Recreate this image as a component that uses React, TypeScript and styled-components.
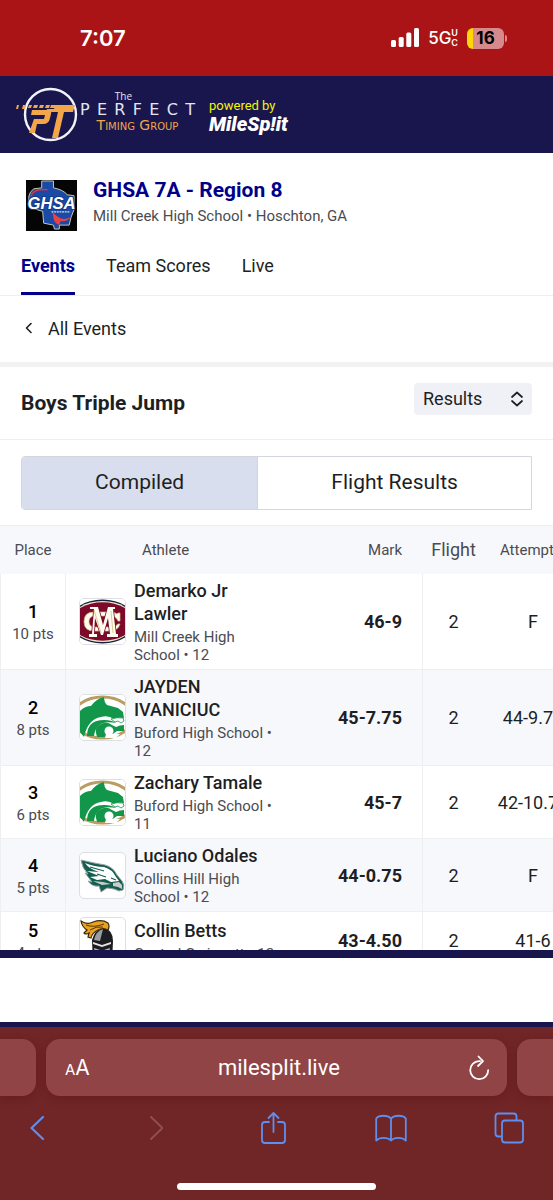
import React from "react";
import styled, { createGlobalStyle } from "styled-components";

const color = {
  statusRed: "#ab1416",
  navy: "#18164d",
  link: "#00008b",
  ink: "#1d1f24",
  muted: "#4a4c52",
  line: "#efeff1",
  stripe: "#f7f8fc",
  chrome: "#702526",
  pill: "#904445",
  chromeBlue: "#5e8ff0",
};

const GlobalStyle = createGlobalStyle`
  *, *::before, *::after { box-sizing: border-box; }
  body {
    margin: 0;
    background: #fff;
    color: ${color.ink};
    font-family: Roboto, "Liberation Sans", sans-serif;
  }
  button, select { font: inherit; color: inherit; }
`;

const Screen = styled.div`
  display: flex;
  flex-direction: column;
  height: 100vh;
  overflow: hidden;
`;

const StatusBar = styled.div`
  flex: none;
  display: flex;
  align-items: center;
  justify-content: space-between;
  height: 76px;
  padding: 0 46px 0 80px;
  background: ${color.statusRed};
  color: #fff;
  font-family: Inter, sans-serif;
`;

const Clock = styled.time`
  font-size: 22px;
  font-weight: 600;
  line-height: 28px;
`;

const StatusIcons = styled.div`
  display: flex;
  align-items: center;
  gap: 9px;
`;

const Network = styled.span`
  display: flex;
  align-items: center;
  font-size: 17px;
  font-weight: 500;
  line-height: 24px;
`;

const NetworkBand = styled.span`
  display: flex;
  flex-direction: column;
  font-size: 9px;
  font-weight: 600;
  line-height: 10px;
`;

const Battery = styled.span`
  display: flex;
  align-items: center;
  gap: 1px;
  &::after {
    content: "";
    width: 2px;
    height: 7px;
    border-radius: 0 3px 3px 0;
    background: #d68a8b;
  }
`;

const BatteryCell = styled.span`
  width: 37px;
  height: 21px;
  border-radius: 6px;
  background: linear-gradient(90deg, #ffd60a 6px, #d68a8b 6px);
  color: #000;
  font-size: 17px;
  font-weight: 700;
  line-height: 21px;
  text-align: center;
`;

const SponsorBar = styled.header`
  flex: none;
  display: flex;
  align-items: center;
  gap: 14px;
  height: 77px;
  padding: 0 16px;
  background: ${color.navy};
`;

const Sponsor = styled.div`
  display: flex;
  align-items: center;
  gap: 2px;
`;

const Wordmark = styled.div`
  display: flex;
  flex-direction: column;
  align-items: center;
  width: 115px;
  padding-bottom: 8px;
  color: #e4e4f2;
`;

const WordThe = styled.span`
  font-family: "Open Sans", sans-serif;
  font-size: 10px;
  line-height: 12px;
  padding-right: 28px;
`;

const WordPerfect = styled.span`
  display: flex;
  justify-content: space-between;
  width: 100%;
  font-family: "DejaVu Sans", sans-serif;
  font-size: 16px;
  line-height: 16px;
`;

const WordTiming = styled.span`
  font-family: "DejaVu Sans", sans-serif;
  font-variant: small-caps;
  font-size: 14px;
  line-height: 14px;
  white-space: nowrap;
  color: #f0a64c;
`;

const Powered = styled.div`
  display: flex;
  flex-direction: column;
  padding-top: 3px;
  color: #f2f500;
  font-size: 13px;
  line-height: 16px;
`;

const MileSplit = styled.a`
  color: #fff;
  font-size: 20px;
  font-style: italic;
  font-weight: 900;
  line-height: 21px;
  text-decoration: none;
`;

const Content = styled.main`
  flex: 1;
  min-height: 0;
  overflow: hidden;
`;

const MeetHeader = styled.section`
  height: 143px;
  padding: 25px 21px 0;
  border-bottom: 1px solid ${color.line};
  display: flex;
  flex-direction: column;
  justify-content: space-between;
`;

const Meet = styled.div`
  display: flex;
  align-items: center;
  gap: 16px;
  padding-left: 5px;
`;

const MeetText = styled.div`
  min-width: 0;
  padding-bottom: 2px;
`;

const MeetTitle = styled.h1`
  margin: 0;
  color: ${color.link};
  font-size: 21px;
  font-weight: 700;
  line-height: 24px;
`;

const MeetVenue = styled.p`
  margin: 0;
  color: ${color.muted};
  font-size: 15px;
  line-height: 28px;
`;

const Tabs = styled.nav`
  display: flex;
  gap: 31px;
`;

const Tab = styled.a<{ $active?: boolean }>`
  height: 42px;
  border-bottom: 3px solid ${(p) => (p.$active ? color.link : "transparent")};
  color: ${(p) => (p.$active ? color.link : color.ink)};
  font-size: 18px;
  font-weight: ${(p) => (p.$active ? 700 : 400)};
  line-height: 26px;
  text-decoration: none;
`;

const BackLink = styled.a`
  display: flex;
  align-items: center;
  gap: 15px;
  height: 66px;
  padding: 0 24px 2px;
  color: ${color.ink};
  font-size: 18px;
  text-decoration: none;
`;

const EventHeader = styled.section`
  display: flex;
  align-items: center;
  justify-content: space-between;
  height: 78px;
  padding: 0 21px;
  border-top: 5px solid #f2f2f3;
  border-bottom: 1px solid ${color.line};
`;

const EventTitle = styled.h2`
  margin: 0;
  font-size: 21px;
  font-weight: 700;
  line-height: 28px;
`;

const SelectBox = styled.label`
  position: relative;
  display: block;
  width: 118px;
  height: 40px;
  svg {
    position: absolute;
    right: 8px;
    top: 8px;
    pointer-events: none;
  }
`;

const Select = styled.select`
  appearance: none;
  display: block;
  width: 100%;
  height: 32px;
  padding: 0 9px 2px;
  border: 0;
  border-radius: 4px;
  background: #f0f0f7;
  color: ${color.ink};
  font-size: 18px;
`;

const Segments = styled.div`
  display: flex;
  height: 54px;
  margin: 16px 21px 15px;
  border: 1px solid #d3d6de;
  border-radius: 4px 0 0 4px;
  overflow: hidden;
`;

const Segment = styled.button<{ $active?: boolean }>`
  flex: 1 1 auto;
  padding: 0 0 2px;
  border: 0;
  border-left: ${(p) => (p.$active ? "0" : "1px solid #d3d6de")};
  background: ${(p) => (p.$active ? "#d8deed" : "#fff")};
  color: ${color.ink};
  font-size: 21px;
`;

const Results = styled.table`
  width: 100%;
  min-width: 582px;
  border-collapse: separate;
  border-spacing: 0;
  table-layout: fixed;
`;

const Column = styled.col<{ $width?: number }>`
  width: ${(p) => (p.$width ? `${p.$width}px` : "auto")};
`;

const HeadCell = styled.th<{ $align?: string; $large?: boolean }>`
  height: 49px;
  padding: ${(p) => (p.$align === "left" ? "0 0 0 76px" : p.$align === "right" ? "0 21px 0 0" : "0")};
  border-top: 1px solid ${color.line};
  background: ${color.stripe};
  color: ${color.muted};
  font-size: ${(p) => (p.$large ? 18 : 15)}px;
  font-weight: 400;
  line-height: 24px;
  text-align: ${(p) => p.$align ?? "center"};
  white-space: nowrap;
`;

const Row = styled.tr`
  &:nth-child(even) { background: ${color.stripe}; }
`;

const Cell = styled.td`
  padding: 0;
  border-bottom: 1px solid ${color.line};
  font-size: 18px;
  text-align: center;
  vertical-align: middle;
`;

const PlaceCell = styled(Cell)`
  padding-top: 3px;
  border-left: 1px solid ${color.line};
  border-right: 1px solid ${color.line};
`;

const MarkCell = styled(Cell)`
  padding-right: 20px;
  border-right: 1px solid ${color.line};
  font-weight: 700;
  text-align: right;
`;

const AthleteCell = styled(Cell)`
  padding: 5px 8px 5px 13px;
  text-align: left;
`;

const PlaceNumber = styled.div`
  font-weight: 500;
  line-height: 22px;
  color: #000;
`;

const Points = styled.div`
  color: ${color.muted};
  font-size: 15px;
  line-height: 22px;
`;

const Athlete = styled.div`
  display: flex;
  align-items: center;
  gap: 8px;
`;

const Badge = styled.span`
  flex: none;
  width: 47px;
  height: 47px;
  border: 1px solid #dedfe3;
  border-radius: 5px;
  background: #fff;
  overflow: hidden;
  svg { display: block; width: 100%; height: 100%; }
`;

const AthleteText = styled.div`
  width: 148px;
`;

const AthleteName = styled.div`
  margin-bottom: 3px;
  font-weight: 500;
  line-height: 23px;
`;

const School = styled.div`
  color: ${color.muted};
  font-size: 15px;
  line-height: 18px;
`;

const AdSlot = styled.aside`
  flex: none;
  height: 77px;
  border-top: 8px solid ${color.navy};
  border-bottom: 5px solid ${color.navy};
  background: #fff;
`;

const BrowserBar = styled.footer`
  flex: none;
  display: flex;
  flex-direction: column;
  align-items: center;
  height: 173px;
  padding: 12px 0 10px;
  background: ${color.chrome};
`;

const TabStrip = styled.div`
  display: flex;
  gap: 10px;
  width: 100%;
  height: 57px;
`;

const NeighborTab = styled.div<{ $side: "left" | "right" }>`
  flex: none;
  width: 36px;
  border-radius: ${(p) => (p.$side === "left" ? "0 14px 14px 0" : "14px 0 0 14px")};
  background: ${color.pill};
  box-shadow: 0 3px 10px rgba(70, 0, 0, 0.2);
`;

const AddressBar = styled.div`
  flex: 1;
  display: flex;
  align-items: center;
  justify-content: space-between;
  padding: 0 17px 0 19px;
  border-radius: 14px;
  background: ${color.pill};
  box-shadow: 0 3px 10px rgba(70, 0, 0, 0.2);
  color: #fff;
`;

const BarButton = styled.button`
  display: flex;
  align-items: center;
  justify-content: center;
  padding: 0;
  border: 0;
  background: none;
`;

const TextSizeButton = styled(BarButton)`
  align-items: baseline;
  font-family: Inter, sans-serif;
  font-size: 21px;
  small { font-size: 15px; }
`;

const Address = styled.span`
  font-size: 22px;
  line-height: 28px;
`;

const Toolbar = styled.nav`
  display: flex;
  justify-content: space-between;
  align-items: center;
  width: 100%;
  height: 64px;
  padding: 0 28px 0 21px;
`;

const ToolButton = styled(BarButton)`
  width: 32px;
  height: 40px;
  color: ${color.chromeBlue};
  &:disabled { color: #8f4e50; }
`;

const HomeIndicator = styled.div`
  width: 36%;
  height: 7px;
  margin-top: auto;
  border-radius: 4px;
  background: #fff;
`;

const SignalIcon = () => (
  <svg width="28" height="20" viewBox="0 0 28 20" fill="#fff" aria-hidden="true">
    <rect x="0" y="12" width="5" height="7" rx="1.5" />
    <rect x="7.7" y="9" width="5" height="10" rx="1.5" />
    <rect x="15.3" y="4.5" width="5" height="14.5" rx="1.5" />
    <rect x="23" y="0" width="5" height="19" rx="1.5" />
  </svg>
);

const TimingLogo = () => (
  <svg width="62" height="56" viewBox="0 0 62 56" aria-hidden="true">
    <circle cx="34.500" cy="27.500" r="25.500" fill="none" stroke="#f2f2fa" strokeWidth="2.4" />
    <g fill="#f3a649">
      <path d="M16 23h17q3 0 2 4l-1 4q-1 6-7 6h-6l-2 9h-6l5-14h10l1-4H15z" />
      <path d="M31 22h7l1-4h20l-2 7h-9l-6 26h-6l6-26h-12z" />
      <path d="M1 18h2l-1 4H0zM7 18h3l-1 4H6zM13 18h3l-1 3h-3zM18 18h4l-1 3h-4zM24 18h4l-1 3h-4zM30 18h4l-1 3h-4zM35 18h4v3h-5z" />
    </g>
  </svg>
);

const GhsaLogo = () => (
  <svg width="51" height="51" viewBox="0 0 52 52" role="img" aria-label="GHSA">
    <rect width="52" height="52" fill="#050505" />
    <path
      d="M16 1h12v7q10 2 14 7l7 1v14l-3 8-2 8H34v4h-5l-1-4-10-2-1-12L4 28Q0 14 8 9l8-1z"
      fill="#1a4aa5"
      stroke="#c9c9ae"
      strokeWidth="1"
    />
    <path d="M5 17Q7 8 22 10" fill="none" stroke="#d9343c" strokeWidth="1.6" />
    <path d="M27 33q4 4 8 6 6 2 12-2-5 6-12 5l-1 4q-5-2-6-7z" fill="#ea4144" />
    <text
      x="26"
      y="30"
      textAnchor="middle"
      fontFamily="Liberation Sans, sans-serif"
      fontSize="17"
      fontWeight="700"
      fontStyle="italic"
      fill="#fff"
      stroke="#143a85"
      strokeWidth="2"
      paintOrder="stroke"
    >
      GHSA
    </text>
    <path d="M26 32.500h19" stroke="#d5dcf0" strokeWidth="1.200" strokeDasharray="2 .7" />
  </svg>
);

const MillCreekLogo = () => (
  <svg viewBox="0 0 45 45" aria-hidden="true">
    <rect width="45" height="45" fill="#fff" />
    <ellipse cx="22.500" cy="22.500" rx="33" ry="22" fill="#14223c" />
    <ellipse cx="22.500" cy="22.500" rx="32" ry="20.500" fill="#f3ead0" />
    <ellipse cx="22.500" cy="22.500" rx="31" ry="19.300" fill="#7d0a2b" />
    <path
      d="M40 14v8h-2q-2-5-8-5H15q-6 0-6 5.500T15 28h15q6 0 8-3h2q-2 7-10 7H14Q4 32 4 22.500T14 13h16q5 0 7 2l1-1z"
      fill="#fffdf0"
      stroke="#d2bd78"
      strokeWidth=".7"
    />
    <path
      d="M10 8h8l5 18 5-18h7v2h-2l3 25h2v3H27v-3h3l-2-16-5 17h-2l-6-17-1 16h3v3H9v-3h3l2-25h-4z"
      fill="#fffdf0"
      stroke="#7d0a2b"
      strokeWidth="1.600"
      paintOrder="stroke"
    />
    <path d="M14 11l7 23M31 12l2 22" fill="none" stroke="#d2bd78" strokeWidth=".8" />
  </svg>
);

const BufordLogo = () => (
  <svg viewBox="0 0 45 45" aria-hidden="true">
    <rect width="45" height="45" fill="#fff" />
    <ellipse cx="22.500" cy="22.500" rx="30" ry="20.500" fill="none" stroke="#b99d63" strokeWidth="3" />
    <path d="M0 16q5-5 11-5 5-7 13-9 0 5 3 8l11 3 5 4 1 6q-6-1-10 1-6-4-13-2Q8 24 4 42l-4-5z" fill="#12974a" />
    <path d="M7 41Q7 25 24 25q8 0 12 3-20-4-22 13z" fill="#12974a" />
    <path d="M17 42q-4-10 4-13 6-3 11 1l4 2q4-2 8-2v6h-7l-7 5-6 1z" fill="#12974a" />
    <circle cx="29" cy="36" r="4.500" fill="#fff" />
    <path d="M26 39h14l-4 4H25z" fill="#fff" />
    <path d="M31 24q6-2 12-1l1 3-3 2-3-2-3 1z" fill="#fff" stroke="#12974a" strokeWidth=".8" />
  </svg>
);

const CollinsHillLogo = () => (
  <svg viewBox="0 0 45 45" aria-hidden="true">
    <path
      d="M1 7q12 3 24 5 8 2 12 10l5 6q3 4 1 9l-4 1-5-2-7-1-6 4-2-6q-7 1-11-5l4 1-7-9 3 1Q2 15 1 7z"
      fill="#145f52"
      stroke="#9aa3a1"
      strokeWidth="1"
    />
    <path
      d="M5 10q10 4 19 4 8 2 12 10l3 4-8 1-6-3-8 1-7-3 9-1-12-5 12 1Q9 16 5 10z"
      fill="#fff"
    />
    <path d="M10 14l14 4M17 21l9 3M31 25l5 2" stroke="#145f52" strokeWidth="1.100" fill="none" />
    <path d="M13 28l10 1 8 2-9 1zM33 30l6-1 3 3v4l-4-2-5-1z" fill="#c6cdcb" />
  </svg>
);

const CentralLogo = () => (
  <svg viewBox="0 0 45 45" aria-hidden="true">
    <path d="M12 22q3-11 12-12 9 2 9 13l-1 22H13z" fill="#1c1d21" />
    <path d="M14 22q2-9 9-11l-3 12z" fill="#9b9da2" />
    <path d="M13 24l9 3 9-3v2l-9 3-9-3z" fill="#e3e3e3" />
    <path d="M14 30l6 2v4l-5-2zM30 30l-6 2v4l5-2z" fill="#b8b9bd" />
    <path d="M15 38l4 1v6h-4zM29 38l-4 1v6h4z" fill="#77797e" />
    <path
      d="M1 3q6 4 12 1 9-3 15 1 2 3 0 7-5-3-10 0-6 3-7 8l-3-1 1-4q-3 2-5 0l3-3Q2 9 1 3z"
      fill="#e9a21f"
      stroke="#38270b"
      strokeWidth="1.200"
    />
    <path d="M6 7q8 3 18-1M10 12q6-4 13-3" fill="none" stroke="#54370a" strokeWidth="1" />
  </svg>
);

const results = [
  { place: 1, points: 10, name: "Demarko Jr Lawler", school: "Mill Creek High School • 12", mark: "46-9", flight: 2, attempt: "F", Logo: MillCreekLogo },
  { place: 2, points: 8, name: "JAYDEN IVANICIUC", school: "Buford High School • 12", mark: "45-7.75", flight: 2, attempt: "44-9.75", Logo: BufordLogo },
  { place: 3, points: 6, name: "Zachary Tamale", school: "Buford High School • 11", mark: "45-7", flight: 2, attempt: "42-10.75", Logo: BufordLogo },
  { place: 4, points: 5, name: "Luciano Odales", school: "Collins Hill High School • 12", mark: "44-0.75", flight: 2, attempt: "F", Logo: CollinsHillLogo },
  { place: 5, points: 4, name: "Collin Betts", school: "Central Gwinnett • 12", mark: "43-4.50", flight: 2, attempt: "41-6", Logo: CentralLogo },
];

const stroke = {
  fill: "none",
  stroke: "currentColor",
  strokeLinecap: "round" as const,
  strokeLinejoin: "round" as const,
};

export default function App() {
  return (
    <Screen>
      <GlobalStyle />
      <StatusBar>
        <Clock>7:07</Clock>
        <StatusIcons>
          <SignalIcon />
          <Network>
            5G
            <NetworkBand>
              <span>U</span>
              <span>C</span>
            </NetworkBand>
          </Network>
          <Battery>
            <BatteryCell>16</BatteryCell>
          </Battery>
        </StatusIcons>
      </StatusBar>

      <SponsorBar>
        <Sponsor>
          <TimingLogo />
          <Wordmark>
            <WordThe>The</WordThe>
            <WordPerfect aria-label="PERFECT">
              {"PERFECT".split("").map((letter, i) => (
                <span key={i}>{letter}</span>
              ))}
            </WordPerfect>
            <WordTiming>Timing Group</WordTiming>
          </Wordmark>
        </Sponsor>
        <Powered>
          powered by
          <MileSplit href="#milesplit">MileSp!it</MileSplit>
        </Powered>
      </SponsorBar>

      <Content>
        <MeetHeader>
          <Meet>
            <GhsaLogo />
            <MeetText>
              <MeetTitle>GHSA 7A - Region 8</MeetTitle>
              <MeetVenue>Mill Creek High School • Hoschton, GA</MeetVenue>
            </MeetText>
          </Meet>
          <Tabs>
            <Tab href="#events" $active>Events</Tab>
            <Tab href="#scores">Team Scores</Tab>
            <Tab href="#live">Live</Tab>
          </Tabs>
        </MeetHeader>

        <BackLink href="#all-events">
          <svg width="9" height="12" viewBox="0 0 9 12" aria-hidden="true">
            <path d="M7 1.500 2.500 6 7 10.500" {...stroke} strokeWidth="1.600" />
          </svg>
          All Events
        </BackLink>

        <EventHeader>
          <EventTitle>Boys Triple Jump</EventTitle>
          <SelectBox>
            <Select aria-label="View" defaultValue="Results">
              <option>Results</option>
            </Select>
            <svg width="14" height="16" viewBox="0 0 14 16" aria-hidden="true">
              <path d="M2 6l5-4.500L12 6M2 10l5 4.500L12 10" {...stroke} strokeWidth="1.700" />
            </svg>
          </SelectBox>
        </EventHeader>

        <Segments>
          <Segment type="button" $active aria-pressed="true">Compiled</Segment>
          <Segment type="button" aria-pressed="false">Flight Results</Segment>
        </Segments>

        <Results>
          <colgroup>
            <Column $width={66} />
            <Column />
            <Column $width={133} />
            <Column $width={61} />
            <Column $width={98} />
          </colgroup>
          <thead>
            <tr>
              <HeadCell>Place</HeadCell>
              <HeadCell $align="left">Athlete</HeadCell>
              <HeadCell $align="right">Mark</HeadCell>
              <HeadCell $large>Flight</HeadCell>
              <HeadCell>Attempt 1</HeadCell>
            </tr>
          </thead>
          <tbody>
            {results.map(({ Logo, ...r }) => (
              <Row key={r.place}>
                <PlaceCell>
                  <PlaceNumber>{r.place}</PlaceNumber>
                  <Points>{r.points} pts</Points>
                </PlaceCell>
                <AthleteCell>
                  <Athlete>
                    <Badge>
                      <Logo />
                    </Badge>
                    <AthleteText>
                      <AthleteName>{r.name}</AthleteName>
                      <School>{r.school}</School>
                    </AthleteText>
                  </Athlete>
                </AthleteCell>
                <MarkCell>{r.mark}</MarkCell>
                <Cell>{r.flight}</Cell>
                <Cell>{r.attempt}</Cell>
              </Row>
            ))}
          </tbody>
        </Results>
      </Content>

      <AdSlot />

      <BrowserBar>
        <TabStrip>
          <NeighborTab $side="left" />
          <AddressBar>
            <TextSizeButton type="button" aria-label="Text size">
              <small>A</small>A
            </TextSizeButton>
            <Address>milesplit.live</Address>
            <BarButton type="button" aria-label="Reload">
              <svg width="22" height="26" viewBox="0 0 22 26" aria-hidden="true">
                <path d="M12 6.200h-1a9 9 0 1 0 9.200 9M10.500 1.500 15 6.200l-5 4.800" {...stroke} strokeWidth="1.800" />
              </svg>
            </BarButton>
          </AddressBar>
          <NeighborTab $side="right" />
        </TabStrip>
        <Toolbar>
          <ToolButton type="button" aria-label="Back">
            <svg width="16" height="28" viewBox="0 0 16 28" aria-hidden="true">
              <path d="M14 3 2.500 14 14 25" {...stroke} strokeWidth="2.200" />
            </svg>
          </ToolButton>
          <ToolButton type="button" aria-label="Forward" disabled>
            <svg width="16" height="28" viewBox="0 0 16 28" aria-hidden="true">
              <path d="m4 3 11.500 11L4 25" {...stroke} strokeWidth="2" />
            </svg>
          </ToolButton>
          <ToolButton type="button" aria-label="Share">
            <svg width="28" height="34" viewBox="0 0 28 34" aria-hidden="true">
              <path d="M10 11H6q-3 0-3 3v15q0 3 3 3h17q3 0 3-3V14q0-3-3-3h-4M14.500 21V2M9.500 7l5-5 5 5" {...stroke} strokeWidth="1.800" />
            </svg>
          </ToolButton>
          <ToolButton type="button" aria-label="Bookmarks">
            <svg width="32" height="28" viewBox="0 0 32 28" aria-hidden="true">
              <path d="M16 4.500v22M16 4.500C12.500.8 4 .8 1.200 4.500v22c3.500-3.500 11.500-3.500 14.800 0 3.300-3.500 11.300-3.500 14.800 0v-22C28 .8 19.500.8 16 4.500z" {...stroke} strokeWidth="1.800" />
            </svg>
          </ToolButton>
          <ToolButton type="button" aria-label="Tabs">
            <svg width="32" height="32" viewBox="0 0 32 32" aria-hidden="true">
              <path d="M8 24.500H5.500q-3 0-3-3v-17q0-3 3-3h15q3 0 3 3V8" {...stroke} strokeWidth="1.800" />
              <rect x="9" y="8.500" width="21" height="22" rx="3" {...stroke} strokeWidth="1.800" />
            </svg>
          </ToolButton>
        </Toolbar>
        <HomeIndicator />
      </BrowserBar>
    </Screen>
  );
}
